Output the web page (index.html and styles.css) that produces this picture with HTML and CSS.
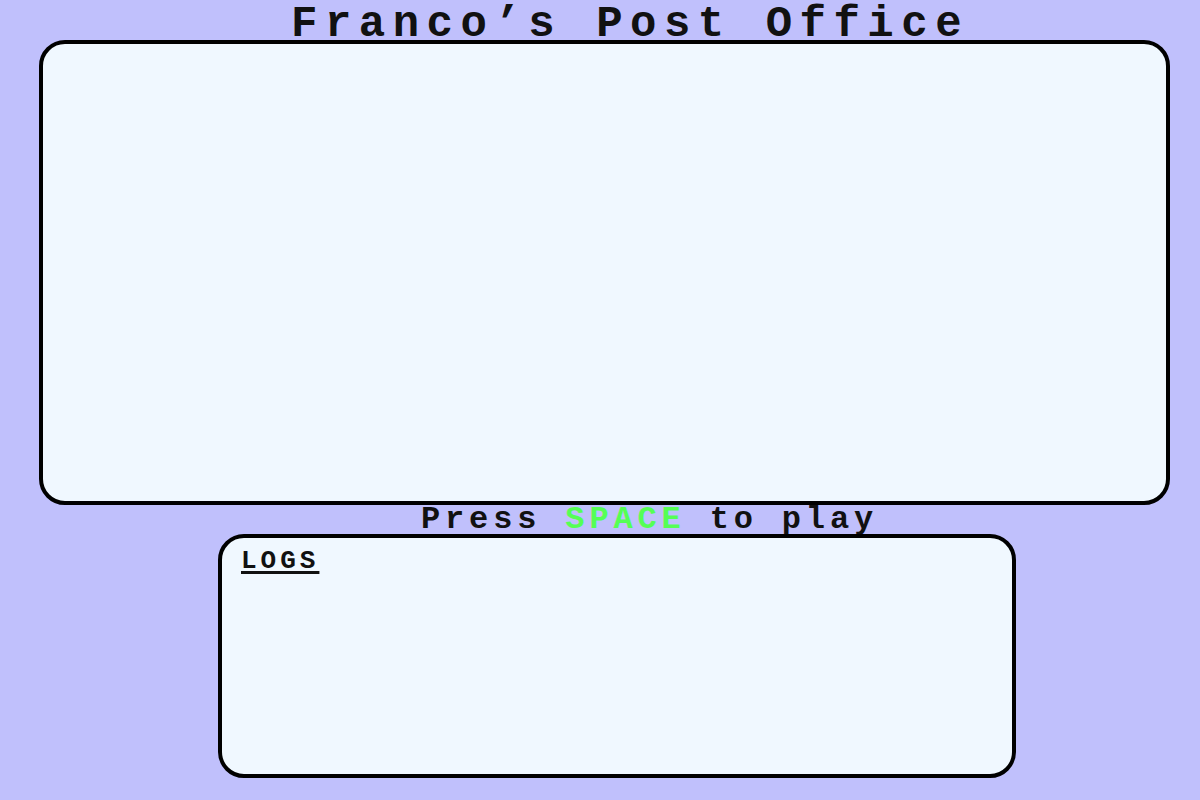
FILE: index.html
```html
<!DOCTYPE html>
<html lang="en">
<head>
<meta charset="utf-8">
<title>Franco's Post Office</title>
<link rel="stylesheet" href="styles.css">
</head>
<body>
  <div class="page">
    <h1 class="title">Franco’s Post Office</h1>
    <div class="stage"></div>
    <p class="prompt">Press <span class="key">SPACE</span> to play</p>
    <section class="logs">
      <h2 class="logs-title">LOGS</h2>
    </section>
  </div>
</body>
</html>
```

FILE: styles.css
```css
html, body {
  margin: 0;
  padding: 0;
  background: #c0c0fc;
}

.page {
  width: 1200px;
  height: 800px;
  display: flex;
  flex-direction: column;
  font-family: "Liberation Mono", "DejaVu Sans Mono", monospace;
  font-weight: bold;
  color: #111111;
}

.title {
  margin: 0;
  height: 40px;
  line-height: 49px;
  font-size: 44px;
  font-weight: bold;
  letter-spacing: 7.5px;
  padding-left: 291px;
  white-space: nowrap;
}

.stage {
  box-sizing: border-box;
  margin-left: 39px;
  width: 1131px;
  height: 465px;
  background: #f0f8ff;
  border: 4px solid #000;
  border-radius: 26px;
}

.prompt {
  margin: 0;
  height: 29px;
  line-height: 29px;
  font-size: 32px;
  letter-spacing: 4.85px;
  padding-left: 421px;
  white-space: nowrap;
}

.key {
  color: #55ff55;
}

.logs {
  box-sizing: border-box;
  margin-left: 218px;
  width: 798px;
  height: 244px;
  background: #f0f8ff;
  border: 4px solid #000;
  border-radius: 26px;
  padding: 8px 19px;
}

.logs-title {
  margin: 0;
  font-size: 26px;
  line-height: 30px;
  letter-spacing: 4px;
  text-decoration: underline;
  text-decoration-thickness: 3px;
  text-underline-offset: 3px;
  font-weight: bold;
}
```
